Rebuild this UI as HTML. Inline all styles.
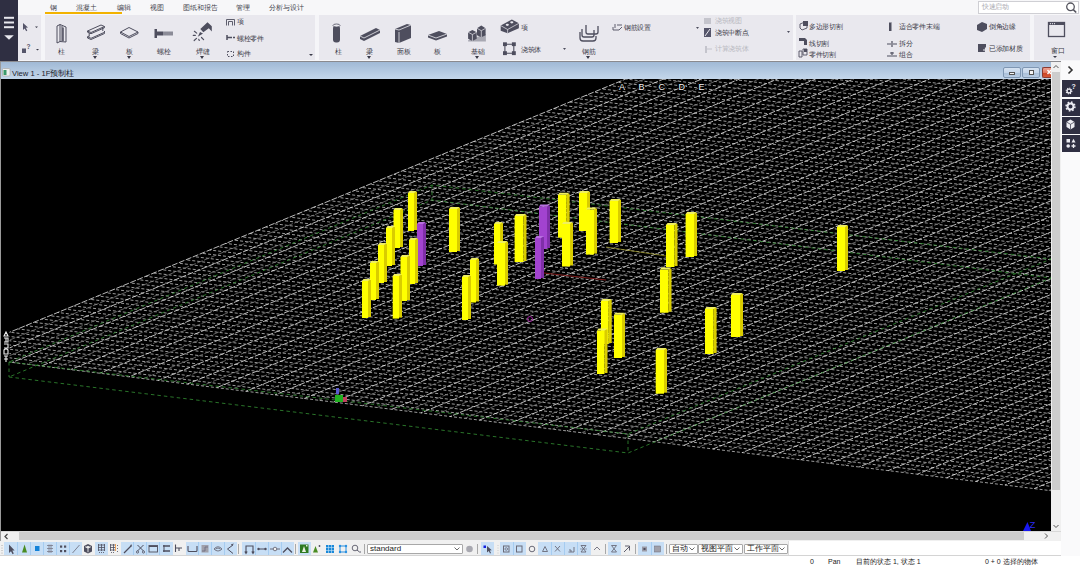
<!DOCTYPE html>
<html><head><meta charset="utf-8">
<style>
*{margin:0;padding:0;box-sizing:border-box}
html,body{width:1080px;height:568px;overflow:hidden;background:#fff;font-family:"Liberation Sans",sans-serif;font-size:8px;color:#333}
.a{position:absolute}
#tabs{left:0;top:0;width:1080px;height:15px;background:#f7f7f9}
#side{left:0;top:0;width:18px;height:61px;background:#2f2f42}
#ribbon{left:18px;top:15px;width:1062px;height:46px;background:#f5f5f8}
.grp{position:absolute;top:15px;height:45px;background:#e9e8ee}
#rline{left:0;top:60.5px;width:1061px;height:1.5px;background:#8a8a8e}
#title{left:0;top:62px;width:1051px;height:17px;background:linear-gradient(#a0b9d5,#c4d7eb);border-left:1.5px solid #a8a8a8}
#view{left:1px;top:79px;width:1050px;height:452px;background:#000;overflow:hidden}
#vscroll{left:1051px;top:62px;width:10px;height:469px;background:#f0f0f0}
#hscroll{left:1px;top:531px;width:1060px;height:10px;background:#f0f0f0;border-top:1px solid #d8d8d8}
#tool{left:0;top:541px;width:1062px;height:15px;background:#f0f0f0;border-bottom:1px solid #d0d0d0;border-right:1px solid #d0d0d0}
#status{left:0;top:556px;width:1080px;height:12px;background:#fff}
#rpanel{left:1061px;top:61px;width:19px;height:495px;background:#fafafb}
.t{position:absolute;font-size:7px;line-height:9px;color:#3e3e4a;white-space:nowrap}
.s{position:absolute;font-size:6.5px;line-height:8px;color:#3a3a46;white-space:nowrap;letter-spacing:-0.3px}
.dis{color:#b8b8c0}
.tri{position:absolute;width:0;height:0;border-left:2.5px solid transparent;border-right:2.5px solid transparent;border-top:3px solid #3a3a48}
.rb{position:absolute;top:80px;left:1062px;width:18px;height:17px;background:#2f2f42}
.hl{position:absolute;top:542px;height:13px;background:#c9e0f7;border:1px solid #a9cdf0}
.sep{position:absolute;top:543px;width:1px;height:11px;background:#c0c0c0}
.dd{position:absolute;top:543px;height:11px;background:#fff;border:1px solid #a0a0a0;font-size:7px;line-height:9px;padding-left:2px;color:#222}
.st{position:absolute;top:558px;font-size:7px;line-height:8px;color:#222;white-space:nowrap}
</style></head><body>
<div id="tabs" class="a"></div>
<div id="side" class="a"></div>
<div id="ribbon" class="a"></div>
<div class="grp" style="left:18px;width:23px"></div>
<div class="grp" style="left:45px;width:270px"></div>
<div class="grp" style="left:319px;width:474px"></div>
<div class="grp" style="left:796px;width:234px"></div>
<div class="grp" style="left:1034px;width:46px"></div>
<div id="rline" class="a"></div>

<!-- tabs -->
<div class="t" style="left:50px;top:3px">钢</div>
<div class="t" style="left:76px;top:3px">混凝土</div>
<div class="t" style="left:117px;top:3px">编辑</div>
<div class="t" style="left:150px;top:3px">视图</div>
<div class="t" style="left:183px;top:3px">图纸和报告</div>
<div class="t" style="left:236px;top:3px">管理</div>
<div class="t" style="left:269px;top:3px">分析与设计</div>
<div class="a" style="left:45px;top:12px;width:77px;height:2px;background:#f2b200"></div>
<div class="a" style="left:978px;top:1px;width:101px;height:13px;background:#fff;border:1px solid #cfcfd4"></div>
<div class="s dis" style="left:982px;top:3px;color:#a8a8b0">快速启动</div>
<svg class="a" style="left:1065px;top:1px" width="14" height="13"><circle cx="5.5" cy="5.8" r="3.8" stroke="#55555f" stroke-width="1.3" fill="none"/><path d="M8.3 8.6L11.2 11.5" stroke="#55555f" stroke-width="1.6"/></svg>

<!-- sidebar -->
<svg class="a" style="left:0;top:0" width="18" height="61">
<rect x="4" y="16.8" width="10" height="2" fill="#e8e8ee"/><rect x="4" y="21.5" width="10" height="2" fill="#e8e8ee"/><rect x="4" y="26.2" width="10" height="2" fill="#e8e8ee"/>
<path d="M4.2 35.2L13.8 35.2L9 39.8Z" fill="#e8e8ee"/>
</svg>

<!-- group 0 -->
<svg class="a" style="left:18px;top:15px" width="23" height="45">
<path d="M5 8L5 15L6.6 13.4L8.2 16.2L9.3 15.6L7.8 12.8L10 12.6Z" fill="#55556a"/>
<path d="M17 11.5L20 11.5L18.5 13Z" fill="#3a3a48"/>
<rect x="4" y="33.5" width="4" height="4.5" fill="#55556a"/>
<text x="8.5" y="33.5" font-size="6.5" font-weight="bold" fill="#55556a" font-family="Liberation Sans">?</text>
<path d="M18 34L21 34L19.5 35.5Z" fill="#3a3a48"/>
</svg>

<!-- group 1 icons -->
<svg class="a" style="left:45px;top:15px" width="270" height="45" fill="none" stroke="#4e4e5e" stroke-width="1">
<!-- column -->
<path d="M12 11L15 9.5L15 26.5L12 28Z M15 9.5L21 12L21 27L15 26.5 M17 11L17 26" />
<path d="M18 12.5L18 26" stroke-width="1.5"/>
<!-- beam -->
<path d="M42.5 16L56 10L59.5 11.5L46 17.5Z M42.5 16L42.5 17.2L46 18.7L59.5 12.7L59.5 11.5 M44.2 17.8L44.2 21.5 M42.5 21.8L46 23.3L59.5 17.3L59.5 16 M42.5 21.8L42.5 23L46 24.5L59.5 18.5L59.5 17.3 M42.5 21.8L44.2 21 M57.8 12.3L57.8 16"/>
<!-- plate -->
<path d="M75.5 17L84 12.5L93 17L84 21.5Z M75.5 17L75.5 18.5L84 23L93 18.5L93 17"/>
<!-- bolt -->
<rect x="109.5" y="14" width="2.5" height="9" fill="#4e4e5e" stroke="none"/>
<rect x="112" y="16.5" width="6" height="4" fill="#4e4e5e" stroke="none"/>
<path d="M119 16.5L119 20.5 M121 16.5L121 20.5 M123 16.5L123 20.5 M125 16.5L125 20.5 M127 16.5L127 20.5" stroke-width="1.2"/>
<!-- weld -->
<path d="M155.3 14L162.5 7.3L166.8 11.2L166.8 16.5L163.8 13.2L158.3 17.2Z" fill="#4e4e5e" stroke="none"/>
<path d="M152.8 21.8L155 17L158 18.6Z" fill="#4e4e5e" stroke="none"/>
<path d="M149.4 16.3L151.7 18.1 M148.3 20.4L150.3 20.4 M149.2 25.5L151.5 23.4 M153.8 24.4L154.3 25.5 M156.5 22.5L158.6 24.6" stroke-width="1.2" stroke-linecap="round"/>
<!-- small icons -->
<path d="M181.5 10.5L181.5 4.5L189.5 4.5L189.5 10.5 M183.5 10.5L183.5 6.5L187.5 6.5L187.5 10.5" stroke-width="0.9"/>
<path d="M182 20L182 25 M182 22.5L187 22.5 M188 22.5L190 22.5" stroke-width="1.5"/>
<rect x="182.5" y="36.5" width="6" height="5" stroke-dasharray="1.5 1.5"/>
<path d="M264 39L268 39L266 41Z" fill="#3a3a48" stroke="none"/>
</svg>
<div class="s" style="left:58px;top:48px">柱</div>
<div class="s" style="left:92px;top:48px">梁</div>
<div class="tri" style="left:93px;top:56px"></div>
<div class="s" style="left:126px;top:48px">板</div>
<div class="tri" style="left:127px;top:56px"></div>
<div class="s" style="left:157px;top:48px">螺栓</div>
<div class="s" style="left:196px;top:48px">焊缝</div>
<div class="tri" style="left:200px;top:56px"></div>
<div class="s" style="left:237px;top:18px">项</div>
<div class="s" style="left:237px;top:35px">螺栓零件</div>
<div class="s" style="left:237px;top:50px">构件</div>

<!-- group 2 -->
<svg class="a" style="left:319px;top:15px" width="474" height="45">
<g fill="#4e4e5e">
<rect x="14" y="10.5" width="7" height="17" rx="3"/>
<ellipse cx="17.5" cy="10.5" rx="3.5" ry="1.5" fill="#e9e8ee" stroke="#4e4e5e" stroke-width="0.8"/>
<path d="M41 21L41 24L45 26L61 18L61 15L57 13Z"/>
<path d="M41 21L45 23L61 15" stroke="#e9e8ee" stroke-width="0.8" fill="none"/>
<path d="M76 14L76 27L80 28L92 23L92 10L88 9Z"/>
<path d="M76 14L80 15L92 10" stroke="#e9e8ee" stroke-width="0.8" fill="none"/>
<path d="M80 17L80 28" stroke="#e9e8ee" stroke-width="0.8"/>
<path d="M109 20L109 22.5L117 25.5L128 21.5L128 19L120 16Z"/>
<path d="M109 20L117 23L128 19" stroke="#e9e8ee" stroke-width="0.8" fill="none"/>
<path d="M149.1 25.3L158 22L166.9 19.1L166.9 26.5L149.1 26.5Z" fill="#a8a8b2"/>
<path d="M149.1 17.2L153.4 14.9L157.7 17.2L157.7 23.8L153.4 25.9L149.1 23.8Z"/>
<path d="M158 13.3L162.3 10.6L166.6 13.3L166.6 20.3L162.3 22.2L158 20.3Z"/>
<path d="M149.1 17.2L153.4 19.5L157.7 17.2M153.4 19.5L153.4 25.9M158 13.3L162.3 15.7L166.6 13.3M162.3 15.7L162.3 22.2" stroke="#e9e8ee" stroke-width="0.7" fill="none"/>
<path d="M181.7 10.6L192.9 4.4L199.9 8.3L199.9 13.3L188.6 18.2L181.7 15.7Z"/>
<path d="M181.7 10.6L188.6 14.5L199.9 8.3M188.6 14.5L188.6 18.2" stroke="#e9e8ee" stroke-width="0.7" fill="none"/>
<ellipse cx="188.3" cy="9.8" rx="1.6" ry="1.1" fill="#e9e8ee"/><ellipse cx="192.8" cy="7.3" rx="1.6" ry="1.1" fill="#e9e8ee"/>
<rect x="184" y="27.3" width="3.9" height="3.8"/><rect x="192.9" y="27.3" width="3.9" height="3.8"/><rect x="184" y="36.2" width="3.9" height="3.9"/><rect x="192.9" y="36.2" width="3.9" height="3.9"/>
<path d="M244 33L247 33L245.5 35Z"/>
<path d="M377 12L380 12L378.5 14Z"/>
<path d="M468 16L471 16L469.5 18Z"/>
</g>
<path d="M185.9 29L185.9 38 M194.8 29L194.8 38 M186 29.2L194.8 29.2 M186 38.2L194.8 38.2" stroke="#4e4e5e" stroke-width="1.1" fill="none"/>
<g fill="none" stroke="#4e4e5e" stroke-width="1.3">
<path d="M263 14L263 20Q263 22 265 22L273 22Q275 22 275 20L275 15 M267 10L267 17Q267 19 269 19L277 19Q279 19 279 17L279 11"/>
<path d="M261 17L261 23Q261 26 264 26L274 26Q277 26 277 23L277 21"/>
<path d="M294 12L294 15L300 15L303 12 M296 9L296 13 M298 10L303 10" stroke-width="0.9"/>
</g>
<g fill="#c4c4cc"><rect x="385" y="3" width="7" height="6"/><rect x="386" y="31" width="2" height="7"/><path d="M388 34L393 34" stroke="#c4c4cc" stroke-width="1"/></g>
<g fill="#55556a"><path d="M385 13L392 13L392 22L385 22Z"/></g>
<path d="M386 21L391 14" stroke="#e9e8ee" stroke-width="1"/>
</svg>
<div class="s" style="left:335px;top:48px">柱</div>
<div class="s" style="left:366px;top:48px">梁</div>
<div class="tri" style="left:367px;top:56px"></div>
<div class="s" style="left:397px;top:48px">面板</div>
<div class="s" style="left:434px;top:48px">板</div>
<div class="s" style="left:471px;top:48px">基础</div>
<div class="tri" style="left:475px;top:56px"></div>
<div class="s" style="left:521px;top:23.5px">项</div>
<div class="s" style="left:521px;top:46px">浇筑体</div>
<div class="s" style="left:582px;top:48px">钢筋</div>
<div class="tri" style="left:586px;top:56px"></div>
<div class="s" style="left:624px;top:23.5px">钢筋设置</div>
<div class="s dis" style="left:715px;top:17px">浇筑视图</div>
<div class="s" style="left:715px;top:29px">浇筑中断点</div>
<div class="s dis" style="left:715px;top:45px">计算浇筑体</div>

<!-- group 3 -->
<svg class="a" style="left:796px;top:15px" width="234" height="45">
<g fill="#4e4e5e">
<path d="M4 9L9 7L11 9L11 13L6 15L4 13Z" fill="none" stroke="#4e4e5e" stroke-width="0.9"/>
<rect x="7" y="6" width="5" height="5"/>
<path d="M3 23L9 23L11 25L11 30L8 30L8 26L3 26Z"/>
<path d="M3 36L6 36L6 42L3 42Z M7 34L11 34L11 40L7 40Z" fill="none" stroke="#4e4e5e" stroke-width="0.9"/>
<rect x="8" y="34" width="3" height="3"/>
<rect x="93" y="7" width="2.5" height="9"/><rect x="93" y="6" width="2.5" height="1.5" fill="#e9e8ee"/>
<path d="M91 29L95 29 M97 29L101 29 M96 26L96 32" stroke="#4e4e5e" stroke-width="1.2"/>
<path d="M91 41L101 41 M96 37L96 40 M94 38L98 38" stroke="#4e4e5e" stroke-width="1.2"/>
<path d="M181 10L186 7L191 9L191 14L186 17L181 15Z"/>
<path d="M182 29L190 29L190 37L182 37Z"/>
<path d="M187 35L192 35 M189.5 32.5L189.5 37.5" stroke="#e9e8ee" stroke-width="1.2"/>
</g>
</svg>
<div class="s" style="left:809px;top:23px">多边形切割</div>
<div class="s" style="left:809px;top:40px">线切割</div>
<div class="s" style="left:809px;top:51px">零件切割</div>
<div class="s" style="left:899px;top:23px">适合零件末端</div>
<div class="s" style="left:899px;top:40px">拆分</div>
<div class="s" style="left:899px;top:51px">组合</div>
<div class="s" style="left:989px;top:23px">倒角边缘</div>
<div class="s" style="left:989px;top:45px">已添加材质</div>

<!-- group 4 -->
<svg class="a" style="left:1034px;top:15px" width="46" height="45">
<rect x="14.5" y="7.5" width="16" height="14" fill="none" stroke="#4e4e5e" stroke-width="1.3"/>
<rect x="14.5" y="7.5" width="16" height="2.5" fill="#4e4e5e"/>
<circle cx="16.5" cy="8.7" r="0.6" fill="#e9e8ee"/><circle cx="18.5" cy="8.7" r="0.6" fill="#e9e8ee"/><circle cx="20.5" cy="8.7" r="0.6" fill="#e9e8ee"/>
<path d="M19 41L23 41L21 43Z" fill="#3a3a48"/>
</svg>
<div class="s" style="left:1051px;top:47px">窗口</div>

<!-- title bar -->
<div id="title" class="a"></div>
<svg class="a" style="left:1px;top:68px" width="10" height="10"><rect x="1.5" y="0.5" width="7.5" height="7.5" rx="1" fill="#eef0ee" stroke="#b0b0b0" stroke-width="0.8"/><rect x="2.5" y="2" width="3" height="5" fill="#3a9a6a"/></svg>
<div class="a" style="left:12px;top:68.5px;font-size:7.6px;line-height:9px;color:#1a1a2a;white-space:nowrap">View 1 - 1F预制柱</div>
<div class="a" style="left:1003px;top:67px;width:18px;height:10.5px;border:1px solid #7f97b3;border-radius:2px;background:linear-gradient(#d6e3f1 0%,#c5d6ea 50%,#a9bfd8 52%,#b9cde3 100%)"></div>
<div class="a" style="left:1009px;top:72px;width:6px;height:3px;background:#f4f4f4;border:0.8px solid #555"></div>
<div class="a" style="left:1022px;top:67px;width:18px;height:10.5px;border:1px solid #7f97b3;border-radius:2px;background:linear-gradient(#d6e3f1 0%,#c5d6ea 50%,#a9bfd8 52%,#b9cde3 100%)"></div>
<div class="a" style="left:1028.5px;top:69.5px;width:5.5px;height:5px;background:#f4f4f4;border:0.8px solid #555"></div>
<div class="a" style="left:1042px;top:67px;width:9px;height:10.5px;border:1px solid #8a3a30;border-right:none;border-radius:2px 0 0 2px;background:linear-gradient(#eea090 0%,#e07a60 50%,#c9401f 52%,#d65a3a 100%)"></div>
<svg class="a" style="left:1042px;top:67px" width="9" height="10"><path d="M5.5 3L9 7M5.5 7L9 3" stroke="#fff" stroke-width="1.4"/></svg>
<!-- viewport -->
<div id="view" class="a">
<svg width="1050" height="452" viewBox="1 79 1050 452" style="position:absolute;left:0;top:0">
<clipPath id="gc"><rect x="9.5" y="79" width="1050" height="460"/></clipPath>
<g clip-path="url(#gc)">
<g stroke="#c4c4c4" stroke-width="0.8" fill="none" stroke-dasharray="3 2"><path d="M-46.2 355.2L1051.0 490.7" stroke-dashoffset="1.0"/><path d="M-38.2 351.9L1051.0 486.4" stroke-dashoffset="2.2"/><path d="M-30.2 348.6L1051.0 482.2" stroke-dashoffset="1.5"/><path d="M-22.2 345.3L1051.0 477.9" stroke-dashoffset="2.4"/><path d="M-14.2 342.0L1051.0 473.6" stroke-dashoffset="2.5"/><path d="M-6.2 338.8L1051.0 469.3" stroke-dashoffset="0.3"/><path d="M1.8 335.5L1051.0 465.0" stroke-dashoffset="0.1"/><path d="M9.8 332.2L1051.0 460.8" stroke-dashoffset="3.3"/><path d="M17.8 328.9L1051.0 456.5" stroke-dashoffset="1.0"/><path d="M25.8 325.6L1051.0 452.2" stroke-dashoffset="0.9"/><path d="M33.8 322.3L1051.0 447.9" stroke-dashoffset="4.0"/><path d="M41.8 319.0L1051.0 443.7" stroke-dashoffset="1.9"/><path d="M49.8 315.7L1051.0 439.4" stroke-dashoffset="3.3"/><path d="M57.8 312.5L1051.0 435.1" stroke-dashoffset="1.9"/><path d="M65.8 309.2L1051.0 430.8" stroke-dashoffset="2.6"/><path d="M73.8 305.9L1051.0 426.6" stroke-dashoffset="0.6"/><path d="M81.8 302.6L1051.0 422.3" stroke-dashoffset="2.5"/><path d="M89.8 299.3L1051.0 418.0" stroke-dashoffset="3.5"/><path d="M97.8 296.0L1051.0 413.7" stroke-dashoffset="2.1"/><path d="M105.8 292.7L1051.0 409.5" stroke-dashoffset="3.0"/><path d="M113.8 289.4L1051.0 405.2" stroke-dashoffset="2.7"/><path d="M121.8 286.2L1051.0 400.9" stroke-dashoffset="0.3"/><path d="M129.8 282.9L1051.0 396.6" stroke-dashoffset="3.0"/><path d="M137.8 279.6L1051.0 392.4" stroke-dashoffset="2.4"/><path d="M145.8 276.3L1051.0 388.1" stroke-dashoffset="1.2"/><path d="M153.8 273.0L1051.0 383.8" stroke-dashoffset="0.1"/><path d="M161.8 269.7L1051.0 379.5" stroke-dashoffset="3.5"/><path d="M169.8 266.4L1051.0 375.3" stroke-dashoffset="1.9"/><path d="M177.8 263.1L1051.0 371.0" stroke-dashoffset="2.9"/><path d="M185.8 259.8L1051.0 366.7" stroke-dashoffset="3.5"/><path d="M193.8 256.6L1051.0 362.4" stroke-dashoffset="2.9"/><path d="M201.8 253.3L1051.0 358.1" stroke-dashoffset="3.7"/><path d="M209.8 250.0L1051.0 353.9" stroke-dashoffset="1.6"/><path d="M217.8 246.7L1051.0 349.6" stroke-dashoffset="3.2"/><path d="M225.8 243.4L1051.0 345.3" stroke-dashoffset="1.8"/><path d="M233.8 240.1L1051.0 341.0" stroke-dashoffset="3.7"/><path d="M241.8 236.8L1051.0 336.8" stroke-dashoffset="3.5"/><path d="M249.8 233.5L1051.0 332.5" stroke-dashoffset="0.4"/><path d="M257.8 230.3L1051.0 328.2" stroke-dashoffset="0.5"/><path d="M265.8 227.0L1051.0 323.9" stroke-dashoffset="0.9"/><path d="M273.8 223.7L1051.0 319.7" stroke-dashoffset="3.9"/><path d="M281.8 220.4L1051.0 315.4" stroke-dashoffset="1.7"/><path d="M289.8 217.1L1051.0 311.1" stroke-dashoffset="2.5"/><path d="M297.8 213.8L1051.0 306.8" stroke-dashoffset="1.2"/><path d="M305.8 210.5L1051.0 302.6" stroke-dashoffset="2.0"/><path d="M313.8 207.2L1051.0 298.3" stroke-dashoffset="1.5"/><path d="M321.8 204.0L1051.0 294.0" stroke-dashoffset="1.4"/><path d="M329.8 200.7L1051.0 289.7" stroke-dashoffset="2.3"/><path d="M337.8 197.4L1051.0 285.5" stroke-dashoffset="2.3"/><path d="M345.8 194.1L1051.0 281.2" stroke-dashoffset="3.6"/><path d="M353.8 190.8L1051.0 276.9" stroke-dashoffset="2.7"/><path d="M361.8 187.5L1051.0 272.6" stroke-dashoffset="3.7"/><path d="M369.8 184.2L1051.0 268.4" stroke-dashoffset="3.4"/><path d="M377.8 180.9L1051.0 264.1" stroke-dashoffset="4.0"/><path d="M385.8 177.6L1051.0 259.8" stroke-dashoffset="2.7"/><path d="M393.8 174.4L1051.0 255.5" stroke-dashoffset="0.7"/><path d="M401.8 171.1L1051.0 251.2" stroke-dashoffset="3.4"/><path d="M409.8 167.8L1051.0 247.0" stroke-dashoffset="3.9"/><path d="M417.8 164.5L1051.0 242.7" stroke-dashoffset="3.6"/><path d="M425.8 161.2L1051.0 238.4" stroke-dashoffset="2.3"/><path d="M433.8 157.9L1051.0 234.1" stroke-dashoffset="2.9"/><path d="M441.8 154.6L1051.0 229.9" stroke-dashoffset="0.8"/><path d="M449.8 151.3L1051.0 225.6" stroke-dashoffset="3.3"/><path d="M457.8 148.1L1051.0 221.3" stroke-dashoffset="2.3"/><path d="M465.8 144.8L1051.0 217.0" stroke-dashoffset="1.1"/><path d="M473.8 141.5L1051.0 212.8" stroke-dashoffset="0.3"/><path d="M481.8 138.2L1051.0 208.5" stroke-dashoffset="3.4"/><path d="M489.8 134.9L1051.0 204.2" stroke-dashoffset="4.0"/><path d="M497.8 131.6L1051.0 199.9" stroke-dashoffset="0.4"/><path d="M505.8 128.3L1051.0 195.7" stroke-dashoffset="3.2"/><path d="M513.8 125.0L1051.0 191.4" stroke-dashoffset="1.6"/><path d="M521.8 121.8L1051.0 187.1" stroke-dashoffset="0.6"/><path d="M529.8 118.5L1051.0 182.8" stroke-dashoffset="1.2"/><path d="M537.8 115.2L1051.0 178.6" stroke-dashoffset="3.1"/><path d="M545.8 111.9L1051.0 174.3" stroke-dashoffset="3.5"/><path d="M553.8 108.6L1051.0 170.0" stroke-dashoffset="0.2"/><path d="M561.8 105.3L1051.0 165.7" stroke-dashoffset="2.5"/><path d="M569.8 102.0L1051.0 161.5" stroke-dashoffset="0.2"/><path d="M577.8 98.7L1051.0 157.2" stroke-dashoffset="2.9"/><path d="M585.8 95.4L1051.0 152.9" stroke-dashoffset="1.3"/><path d="M593.8 92.2L1051.0 148.6" stroke-dashoffset="3.5"/><path d="M601.8 88.9L1051.0 144.3" stroke-dashoffset="3.9"/><path d="M609.8 85.6L1051.0 140.1" stroke-dashoffset="2.0"/><path d="M617.8 82.3L1051.0 135.8" stroke-dashoffset="4.0"/><path d="M625.8 79.0L1051.0 131.5" stroke-dashoffset="1.2"/><path d="M633.8 75.7L1051.0 127.2" stroke-dashoffset="0.3"/><path d="M641.8 72.4L1051.0 123.0" stroke-dashoffset="2.4"/><path d="M649.8 69.1L1051.0 118.7" stroke-dashoffset="0.1"/><path d="M657.8 65.9L1051.0 114.4" stroke-dashoffset="0.8"/><path d="M665.8 62.6L1051.0 110.1" stroke-dashoffset="1.6"/><path d="M673.8 59.3L1051.0 105.9" stroke-dashoffset="2.4"/><path d="M681.8 56.0L1051.0 101.6" stroke-dashoffset="0.6"/><path d="M689.8 52.7L1051.0 97.3" stroke-dashoffset="0.2"/><path d="M697.8 49.4L1051.0 93.0" stroke-dashoffset="3.5"/><path d="M705.8 46.1L1051.0 88.8" stroke-dashoffset="1.3"/><path d="M713.8 42.8L1051.0 84.5" stroke-dashoffset="3.8"/><path d="M721.8 39.6L1051.0 80.2" stroke-dashoffset="3.6"/><path d="M729.8 36.3L1051.0 75.9" stroke-dashoffset="1.5"/><path d="M737.8 33.0L1051.0 71.7" stroke-dashoffset="1.8"/><path d="M745.8 29.7L1051.0 67.4" stroke-dashoffset="2.1"/><path d="M753.8 26.4L1051.0 63.1" stroke-dashoffset="2.6"/></g>
<g stroke="#787878" stroke-width="0.8" fill="none" stroke-dasharray="6 1.5"><path d="M-31.6 357.0L644.8 79" stroke-dashoffset="0.2"/><path d="M-2.4 360.6L682.8 79" stroke-dashoffset="4.0"/><path d="M26.8 364.2L720.8 79" stroke-dashoffset="5.1"/><path d="M56.0 367.8L758.7 79" stroke-dashoffset="2.2"/><path d="M85.2 371.4L796.7 79" stroke-dashoffset="1.6"/><path d="M114.4 375.0L834.7 79" stroke-dashoffset="5.6"/><path d="M143.6 378.6L872.7 79" stroke-dashoffset="1.7"/><path d="M172.8 382.2L910.6 79" stroke-dashoffset="1.3"/><path d="M202.0 385.9L948.6 79" stroke-dashoffset="3.0"/><path d="M231.2 389.5L986.6 79" stroke-dashoffset="4.9"/><path d="M260.4 393.1L1024.5 79" stroke-dashoffset="0.7"/><path d="M289.6 396.7L1062.5 79" stroke-dashoffset="2.3"/><path d="M318.8 400.3L1100.5 79" stroke-dashoffset="2.3"/><path d="M348.0 403.9L1138.5 79" stroke-dashoffset="5.8"/><path d="M377.2 407.5L1176.4 79" stroke-dashoffset="3.1"/><path d="M406.4 411.1L1214.4 79" stroke-dashoffset="6.0"/><path d="M435.6 414.7L1252.4 79" stroke-dashoffset="1.2"/><path d="M464.8 418.3L1290.4 79" stroke-dashoffset="2.4"/><path d="M494.0 421.9L1328.3 79" stroke-dashoffset="4.6"/><path d="M523.2 425.5L1366.3 79" stroke-dashoffset="6.2"/><path d="M552.4 429.1L1404.3 79" stroke-dashoffset="3.2"/><path d="M581.6 432.7L1442.3 79" stroke-dashoffset="1.6"/><path d="M610.8 436.3L1480.2 79" stroke-dashoffset="0.8"/><path d="M640.0 439.9L1518.2 79" stroke-dashoffset="3.7"/><path d="M669.2 443.6L1556.2 79" stroke-dashoffset="1.3"/><path d="M698.4 447.2L1594.2 79" stroke-dashoffset="5.6"/><path d="M727.6 450.8L1632.1 79" stroke-dashoffset="5.9"/><path d="M756.8 454.4L1670.1 79" stroke-dashoffset="1.3"/><path d="M786.0 458.0L1708.1 79" stroke-dashoffset="2.0"/><path d="M815.2 461.6L1746.1 79" stroke-dashoffset="5.7"/><path d="M844.4 465.2L1784.0 79" stroke-dashoffset="4.5"/><path d="M873.6 468.8L1822.0 79" stroke-dashoffset="5.6"/><path d="M902.8 472.4L1860.0 79" stroke-dashoffset="2.4"/><path d="M932.0 476.0L1898.0 79" stroke-dashoffset="0.9"/><path d="M961.2 479.6L1935.9 79" stroke-dashoffset="2.0"/><path d="M990.4 483.2L1973.9 79" stroke-dashoffset="5.6"/><path d="M1019.6 486.8L2011.9 79" stroke-dashoffset="1.9"/><path d="M1048.8 490.4L2049.9 79" stroke-dashoffset="2.4"/><path d="M1078.0 494.0L2087.8 79" stroke-dashoffset="2.9"/></g><g stroke="#e8e8e8" stroke-width="0.8" fill="none" stroke-dasharray="6 1.5"><path d="M-46.2 355.2L625.8 79" stroke-dashoffset="4.2"/><path d="M-17.0 358.8L663.8 79" stroke-dashoffset="3.9"/><path d="M12.2 362.4L701.8 79" stroke-dashoffset="4.3"/><path d="M41.4 366.0L739.7 79" stroke-dashoffset="6.6"/><path d="M70.6 369.6L777.7 79" stroke-dashoffset="3.5"/><path d="M99.8 373.2L815.7 79" stroke-dashoffset="3.0"/><path d="M129.0 376.8L853.7 79" stroke-dashoffset="5.0"/><path d="M158.2 380.4L891.6 79" stroke-dashoffset="1.7"/><path d="M187.4 384.0L929.6 79" stroke-dashoffset="2.1"/><path d="M216.6 387.7L967.6 79" stroke-dashoffset="6.8"/><path d="M245.8 391.3L1005.6 79" stroke-dashoffset="3.6"/><path d="M275.0 394.9L1043.5 79" stroke-dashoffset="3.8"/><path d="M304.2 398.5L1081.5 79" stroke-dashoffset="0.1"/><path d="M333.4 402.1L1119.5 79" stroke-dashoffset="2.9"/><path d="M362.6 405.7L1157.5 79" stroke-dashoffset="4.1"/><path d="M391.8 409.3L1195.4 79" stroke-dashoffset="0.1"/><path d="M421.0 412.9L1233.4 79" stroke-dashoffset="4.3"/><path d="M450.2 416.5L1271.4 79" stroke-dashoffset="4.4"/><path d="M479.4 420.1L1309.4 79" stroke-dashoffset="0.4"/><path d="M508.6 423.7L1347.3 79" stroke-dashoffset="4.4"/><path d="M537.8 427.3L1385.3 79" stroke-dashoffset="3.3"/><path d="M567.0 430.9L1423.3 79" stroke-dashoffset="4.8"/><path d="M596.2 434.5L1461.3 79" stroke-dashoffset="2.5"/><path d="M625.4 438.1L1499.2 79" stroke-dashoffset="4.9"/><path d="M654.6 441.7L1537.2 79" stroke-dashoffset="5.2"/><path d="M683.8 445.4L1575.2 79" stroke-dashoffset="0.2"/><path d="M713.0 449.0L1613.1 79" stroke-dashoffset="0.4"/><path d="M742.2 452.6L1651.1 79" stroke-dashoffset="4.7"/><path d="M771.4 456.2L1689.1 79" stroke-dashoffset="6.7"/><path d="M800.6 459.8L1727.1 79" stroke-dashoffset="1.8"/><path d="M829.8 463.4L1765.0 79" stroke-dashoffset="3.2"/><path d="M859.0 467.0L1803.0 79" stroke-dashoffset="4.1"/><path d="M888.2 470.6L1841.0 79" stroke-dashoffset="2.2"/><path d="M917.4 474.2L1879.0 79" stroke-dashoffset="2.5"/><path d="M946.6 477.8L1916.9 79" stroke-dashoffset="2.2"/><path d="M975.8 481.4L1954.9 79" stroke-dashoffset="2.6"/><path d="M1005.0 485.0L1992.9 79" stroke-dashoffset="4.2"/><path d="M1034.2 488.6L2030.9 79" stroke-dashoffset="2.1"/><path d="M1063.4 492.2L2068.8 79" stroke-dashoffset="2.6"/><path d="M1092.6 495.8L2106.8 79" stroke-dashoffset="5.4"/></g>
</g>
<g fill="none" stroke="#349034" stroke-width="0.8" stroke-dasharray="3.5 3">
<path d="M9 362L628 434L1051 259L432 185Z"/>
<path d="M9 377L628 453L1051 278L432 200Z"/>
<path d="M9 362L9 377M628 434L628 453M432 185L432 200"/>
</g>
<g fill="#f4f4f4" font-family="Liberation Sans" font-size="9" stroke="#000" stroke-width="2" paint-order="stroke">
<text x="619" y="89.5">A</text><text x="638.5" y="89.5">B</text><text x="658.5" y="89.5">C</text><text x="678.5" y="89.5">D</text><text x="698.5" y="89.5">E</text>
</g>
<g fill="none" stroke="#f0f0f0" stroke-width="1.1">
<path d="M6 332L4 336L8 336Z M4 338L8 338L8 342L4 342M6 338L6 342 M4 344L8 344L8 348L4 348 M4 350Q6 348 8 350L8 354L4 354Z M4 356L8 356M6 356L6 362M4 359L8 359"/>
</g>
<rect x="408.0" y="193.0" width="6.0" height="38.0" fill="#ffff00"/><rect x="414.0" y="192.0" width="3" height="38.0" fill="#d9cc00"/><polygon points="408.0,193.0 409.5,191.0 417.0,191.0 414.0,193.0" fill="#f0f060"/><rect x="579.0" y="193.0" width="8.0" height="38.0" fill="#ffff00"/><rect x="587.0" y="192.0" width="3" height="38.0" fill="#d9cc00"/><polygon points="579.0,193.0 580.5,191.0 590.0,191.0 587.0,193.0" fill="#f0f060"/><rect x="558.0" y="194.7" width="8.6" height="43.0" fill="#ffff00"/><rect x="566.6" y="193.7" width="3" height="43.0" fill="#d9cc00"/><polygon points="558.0,194.7 559.5,192.7 569.6,192.7 566.6,194.7" fill="#f0f060"/><rect x="609.6" y="201.0" width="8.4" height="42.0" fill="#ffff00"/><rect x="618.0" y="200.0" width="3" height="42.0" fill="#d9cc00"/><polygon points="609.6,201.0 611.1,199.0 621.0,199.0 618.0,201.0" fill="#f0f060"/><rect x="393.5" y="210.0" width="6.5" height="38.0" fill="#ffff00"/><rect x="400.0" y="209.0" width="3" height="38.0" fill="#d9cc00"/><polygon points="393.5,210.0 395.0,208.0 403.0,208.0 400.0,210.0" fill="#f0f060"/><rect x="539.0" y="206.5" width="8.0" height="42.5" fill="#a243cf"/><rect x="547.0" y="205.5" width="3" height="42.5" fill="#7f2fa8"/><polygon points="539.0,206.5 540.5,204.5 550.0,204.5 547.0,206.5" fill="#b870e0"/><rect x="449.0" y="209.0" width="8.0" height="43.0" fill="#ffff00"/><rect x="457.0" y="208.0" width="3" height="43.0" fill="#d9cc00"/><polygon points="449.0,209.0 450.5,207.0 460.0,207.0 457.0,209.0" fill="#f0f060"/><rect x="586.0" y="209.6" width="8.0" height="45.0" fill="#ffff00"/><rect x="594.0" y="208.6" width="3" height="45.0" fill="#d9cc00"/><polygon points="586.0,209.6 587.5,207.6 597.0,207.6 594.0,209.6" fill="#f0f060"/><rect x="685.6" y="214.0" width="8.4" height="43.0" fill="#ffff00"/><rect x="694.0" y="213.0" width="3" height="43.0" fill="#d9cc00"/><polygon points="685.6,214.0 687.1,212.0 697.0,212.0 694.0,214.0" fill="#f0f060"/><rect x="514.6" y="216.0" width="8.9" height="46.0" fill="#ffff00"/><rect x="523.5" y="215.0" width="3" height="46.0" fill="#d9cc00"/><polygon points="514.6,216.0 516.1,214.0 526.5,214.0 523.5,216.0" fill="#f0f060"/><rect x="494.0" y="224.0" width="6.0" height="40.5" fill="#ffff00"/><rect x="500.0" y="223.0" width="3" height="40.5" fill="#d9cc00"/><polygon points="494.0,224.0 495.5,222.0 503.0,222.0 500.0,224.0" fill="#f0f060"/><rect x="386.0" y="228.0" width="6.0" height="38.0" fill="#ffff00"/><rect x="392.0" y="227.0" width="3" height="38.0" fill="#d9cc00"/><polygon points="386.0,228.0 387.5,226.0 395.0,226.0 392.0,228.0" fill="#f0f060"/><rect x="417.0" y="224.0" width="6.0" height="42.0" fill="#a243cf"/><rect x="423.0" y="223.0" width="3" height="42.0" fill="#7f2fa8"/><polygon points="417.0,224.0 418.5,222.0 426.0,222.0 423.0,224.0" fill="#b870e0"/><rect x="562.0" y="224.0" width="8.0" height="42.5" fill="#ffff00"/><rect x="570.0" y="223.0" width="3" height="42.5" fill="#d9cc00"/><polygon points="562.0,224.0 563.5,222.0 573.0,222.0 570.0,224.0" fill="#f0f060"/><rect x="666.0" y="225.0" width="8.5" height="42.0" fill="#ffff00"/><rect x="674.5" y="224.0" width="3" height="42.0" fill="#d9cc00"/><polygon points="666.0,225.0 667.5,223.0 677.5,223.0 674.5,225.0" fill="#f0f060"/><rect x="837.0" y="227.0" width="8.0" height="44.0" fill="#ffff00"/><rect x="845.0" y="226.0" width="3" height="44.0" fill="#d9cc00"/><polygon points="837.0,227.0 838.5,225.0 848.0,225.0 845.0,227.0" fill="#f0f060"/><rect x="535.0" y="238.0" width="6.0" height="41.0" fill="#a243cf"/><rect x="541.0" y="237.0" width="3" height="41.0" fill="#7f2fa8"/><polygon points="535.0,238.0 536.5,236.0 544.0,236.0 541.0,238.0" fill="#b870e0"/><rect x="378.0" y="245.0" width="6.0" height="38.0" fill="#ffff00"/><rect x="384.0" y="244.0" width="3" height="38.0" fill="#d9cc00"/><polygon points="378.0,245.0 379.5,243.0 387.0,243.0 384.0,245.0" fill="#f0f060"/><rect x="409.0" y="240.0" width="6.0" height="44.0" fill="#ffff00"/><rect x="415.0" y="239.0" width="3" height="44.0" fill="#d9cc00"/><polygon points="409.0,240.0 410.5,238.0 418.0,238.0 415.0,240.0" fill="#f0f060"/><rect x="497.0" y="243.0" width="8.0" height="42.6" fill="#ffff00"/><rect x="505.0" y="242.0" width="3" height="42.6" fill="#d9cc00"/><polygon points="497.0,243.0 498.5,241.0 508.0,241.0 505.0,243.0" fill="#f0f060"/><rect x="370.0" y="263.0" width="6.0" height="37.0" fill="#ffff00"/><rect x="376.0" y="262.0" width="3" height="37.0" fill="#d9cc00"/><polygon points="370.0,263.0 371.5,261.0 379.0,261.0 376.0,263.0" fill="#f0f060"/><rect x="400.5" y="257.0" width="6.5" height="44.0" fill="#ffff00"/><rect x="407.0" y="256.0" width="3" height="44.0" fill="#d9cc00"/><polygon points="400.5,257.0 402.0,255.0 410.0,255.0 407.0,257.0" fill="#f0f060"/><rect x="470.0" y="260.0" width="6.0" height="42.5" fill="#ffff00"/><rect x="476.0" y="259.0" width="3" height="42.5" fill="#d9cc00"/><polygon points="470.0,260.0 471.5,258.0 479.0,258.0 476.0,260.0" fill="#f0f060"/><rect x="660.0" y="269.6" width="8.5" height="43.1" fill="#ffff00"/><rect x="668.5" y="268.6" width="3" height="43.1" fill="#d9cc00"/><polygon points="660.0,269.6 661.5,267.6 671.5,267.6 668.5,269.6" fill="#f0f060"/><rect x="362.0" y="281.0" width="6.0" height="37.0" fill="#ffff00"/><rect x="368.0" y="280.0" width="3" height="37.0" fill="#d9cc00"/><polygon points="362.0,281.0 363.5,279.0 371.0,279.0 368.0,281.0" fill="#f0f060"/><rect x="392.7" y="276.0" width="6.3" height="42.6" fill="#ffff00"/><rect x="399.0" y="275.0" width="3" height="42.6" fill="#d9cc00"/><polygon points="392.7,276.0 394.2,274.0 402.0,274.0 399.0,276.0" fill="#f0f060"/><rect x="462.0" y="277.0" width="6.0" height="43.0" fill="#ffff00"/><rect x="468.0" y="276.0" width="3" height="43.0" fill="#d9cc00"/><polygon points="462.0,277.0 463.5,275.0 471.0,275.0 468.0,277.0" fill="#f0f060"/><rect x="731.0" y="295.0" width="9.0" height="42.0" fill="#ffff00"/><rect x="740.0" y="294.0" width="3" height="42.0" fill="#d9cc00"/><polygon points="731.0,295.0 732.5,293.0 743.0,293.0 740.0,295.0" fill="#f0f060"/><rect x="601.0" y="301.0" width="7.7" height="43.0" fill="#ffff00"/><rect x="608.7" y="300.0" width="3" height="43.0" fill="#d9cc00"/><polygon points="601.0,301.0 602.5,299.0 611.7,299.0 608.7,301.0" fill="#f0f060"/><rect x="705.0" y="309.0" width="8.6" height="45.0" fill="#ffff00"/><rect x="713.6" y="308.0" width="3" height="45.0" fill="#d9cc00"/><polygon points="705.0,309.0 706.5,307.0 716.6,307.0 713.6,309.0" fill="#f0f060"/><rect x="614.0" y="314.7" width="8.0" height="43.3" fill="#ffff00"/><rect x="622.0" y="313.7" width="3" height="43.3" fill="#d9cc00"/><polygon points="614.0,314.7 615.5,312.7 625.0,312.7 622.0,314.7" fill="#f0f060"/><rect x="597.0" y="330.5" width="7.5" height="43.5" fill="#ffff00"/><rect x="604.5" y="329.5" width="3" height="43.5" fill="#d9cc00"/><polygon points="597.0,330.5 598.5,328.5 607.5,328.5 604.5,330.5" fill="#f0f060"/><rect x="655.7" y="350.0" width="8.3" height="43.7" fill="#ffff00"/><rect x="664.0" y="349.0" width="3" height="43.7" fill="#d9cc00"/><polygon points="655.7,350.0 657.2,348.0 667.0,348.0 664.0,350.0" fill="#f0f060"/>
<path d="M544 273L606 280" stroke="#a02020" stroke-width="0.8"/><path d="M606 247L666 256" stroke="#a09a20" stroke-width="0.7"/>
<circle cx="530" cy="319" r="2.5" stroke="#a020a0" fill="none" stroke-width="1"/>
<rect x="336" y="388" width="3" height="6" fill="#5a5ad0"/>
<rect x="335" y="395" width="8" height="7" fill="#20b020"/>
<rect x="343" y="397" width="4" height="5" fill="#c04060"/>
<path d="M1023 531L1027.5 522L1031 531Z" fill="#1818f0"/>
<text x="1029.5" y="527.5" font-size="9.5" fill="#2a2af0" font-family="Liberation Sans">Z</text>
</svg>
</div>

<!-- scrollbars -->
<div id="vscroll" class="a"></div>
<div class="a" style="left:1052px;top:72px;width:8px;height:418px;background:#cdcdcd"></div>
<svg class="a" style="left:1051px;top:62px" width="10" height="10"><path d="M2.5 6L5 3.5L7.5 6" stroke="#555" fill="none" stroke-width="1"/></svg>
<svg class="a" style="left:1051px;top:521px" width="10" height="10"><path d="M2.5 4L5 6.5L7.5 4" stroke="#555" fill="none" stroke-width="1"/></svg>
<div id="hscroll" class="a"></div>
<div class="a" style="left:19px;top:532px;width:1005px;height:8px;background:#cdcdcd"></div>
<svg class="a" style="left:1px;top:531px" width="17" height="10"><path d="M6.5 3L4 5.5L6.5 8" stroke="#444" fill="none" stroke-width="1.2"/></svg><div class="a" style="left:0;top:62px;width:1px;height:479px;background:#9a9a9a"></div>
<svg class="a" style="left:1040px;top:531px" width="11" height="10"><path d="M5 2.5L7.5 5L5 7.5" stroke="#555" fill="none" stroke-width="1"/></svg>

<!-- toolbar -->
<div class="a" style="left:0;top:541px;width:1062px;height:15px;background:#fff;border-bottom:1px solid #d4d4d4;border-right:1px solid #d4d4d4"></div>
<div class="a" style="left:0;top:541px;width:789px;height:14px;background:#f0f0f0;border-right:1px solid #dcdcdc"></div>
<div class="a" style="left:4px;top:542px;width:78.0px;height:13px;background:#c7def5"></div><div class="a" style="left:16.5px;top:542px;width:1px;height:13px;background:#a6ccf0"></div><div class="a" style="left:29.5px;top:542px;width:1px;height:13px;background:#a6ccf0"></div><div class="a" style="left:42.5px;top:542px;width:1px;height:13px;background:#a6ccf0"></div><div class="a" style="left:55.5px;top:542px;width:1px;height:13px;background:#a6ccf0"></div><div class="a" style="left:68.5px;top:542px;width:1px;height:13px;background:#a6ccf0"></div>
<div class="a" style="left:95px;top:542px;width:13.0px;height:13px;background:#c7def5"></div>
<div class="a" style="left:121px;top:542px;width:51.6px;height:13px;background:#c7def5"></div><div class="a" style="left:133.4px;top:542px;width:1px;height:13px;background:#a6ccf0"></div><div class="a" style="left:146.3px;top:542px;width:1px;height:13px;background:#a6ccf0"></div><div class="a" style="left:159.2px;top:542px;width:1px;height:13px;background:#a6ccf0"></div>
<div class="a" style="left:186px;top:542px;width:51.0px;height:13px;background:#c7def5"></div><div class="a" style="left:198.2px;top:542px;width:1px;height:13px;background:#a6ccf0"></div><div class="a" style="left:211.0px;top:542px;width:1px;height:13px;background:#a6ccf0"></div><div class="a" style="left:223.8px;top:542px;width:1px;height:13px;background:#a6ccf0"></div>
<div class="a" style="left:238px;top:544px;width:1px;height:10px;background:#a8a8a8"></div>
<div class="a" style="left:242px;top:542px;width:52.0px;height:13px;background:#c7def5"></div><div class="a" style="left:254.5px;top:542px;width:1px;height:13px;background:#a6ccf0"></div><div class="a" style="left:267.5px;top:542px;width:1px;height:13px;background:#a6ccf0"></div><div class="a" style="left:280.5px;top:542px;width:1px;height:13px;background:#a6ccf0"></div>
<div class="a" style="left:295px;top:544px;width:1px;height:10px;background:#a8a8a8"></div>
<div class="a" style="left:298px;top:542px;width:12.5px;height:13px;background:#c7def5"></div>
<div class="a" style="left:364px;top:544px;width:1px;height:10px;background:#a8a8a8"></div>
<div class="a" style="left:367px;top:544px;width:96px;height:10px;background:#fff;border:1px solid #a8a8a8;border-radius:1px"></div><div class="a" style="left:370px;top:544px;font-size:8px;line-height:10px;color:#222;white-space:nowrap">standard</div><svg class="a" style="left:454px;top:547px" width="6" height="4"><path d="M0.5 0.5L3 3L5.5 0.5" stroke="#444" fill="none" stroke-width="0.8"/></svg>
<div class="a" style="left:477px;top:544px;width:1px;height:10px;background:#a8a8a8"></div>
<div class="a" style="left:481px;top:542px;width:13.0px;height:13px;background:#c7def5"></div>
<div class="a" style="left:500px;top:542px;width:26.0px;height:13px;background:#c7def5"></div><div class="a" style="left:512.5px;top:542px;width:1px;height:13px;background:#a6ccf0"></div>
<div class="a" style="left:538px;top:542px;width:52.5px;height:13px;background:#c7def5"></div><div class="a" style="left:550.6px;top:542px;width:1px;height:13px;background:#a6ccf0"></div><div class="a" style="left:563.8px;top:542px;width:1px;height:13px;background:#a6ccf0"></div><div class="a" style="left:576.9px;top:542px;width:1px;height:13px;background:#a6ccf0"></div>
<div class="a" style="left:605px;top:544px;width:1px;height:10px;background:#a8a8a8"></div>
<div class="a" style="left:608px;top:542px;width:12.6px;height:13px;background:#c7def5"></div>
<div class="a" style="left:635px;top:544px;width:1px;height:10px;background:#a8a8a8"></div>
<div class="a" style="left:638px;top:542px;width:26.0px;height:13px;background:#c7def5"></div><div class="a" style="left:650.5px;top:542px;width:1px;height:13px;background:#a6ccf0"></div>
<div class="a" style="left:665.5px;top:544px;width:1px;height:10px;background:#a8a8a8"></div>
<div class="a" style="left:669px;top:544px;width:29px;height:10px;background:#fff;border:1px solid #a8a8a8;border-radius:1px"></div><div class="a" style="left:672px;top:544px;font-size:8px;line-height:10px;color:#222;white-space:nowrap">自动</div><svg class="a" style="left:689px;top:547px" width="6" height="4"><path d="M0.5 0.5L3 3L5.5 0.5" stroke="#444" fill="none" stroke-width="0.8"/></svg>
<div class="a" style="left:698px;top:544px;width:45px;height:10px;background:#fff;border:1px solid #a8a8a8;border-radius:1px"></div><div class="a" style="left:701px;top:544px;font-size:8px;line-height:10px;color:#222;white-space:nowrap">视图平面</div><svg class="a" style="left:734px;top:547px" width="6" height="4"><path d="M0.5 0.5L3 3L5.5 0.5" stroke="#444" fill="none" stroke-width="0.8"/></svg>
<div class="a" style="left:744px;top:544px;width:44px;height:10px;background:#fff;border:1px solid #a8a8a8;border-radius:1px"></div><div class="a" style="left:747px;top:544px;font-size:8px;line-height:10px;color:#222;white-space:nowrap">工作平面</div><svg class="a" style="left:779px;top:547px" width="6" height="4"><path d="M0.5 0.5L3 3L5.5 0.5" stroke="#444" fill="none" stroke-width="0.8"/></svg>
<svg class="a" style="left:0;top:541px" width="800" height="15">
<g fill="#4e4e5e" stroke="none">
<circle cx="2" cy="4.5" r="0.5" fill="#999"/><circle cx="2" cy="7" r="0.5" fill="#999"/><circle cx="2" cy="9.5" r="0.5" fill="#999"/><circle cx="2" cy="12" r="0.5" fill="#999"/>
<path d="M9 3.5L9 12L11 10.2L12.6 13.2L13.8 12.6L12.3 9.6L14.6 9.4Z"/>
<path d="M22 11.5L24.5 3.5L27 11.5Z" fill="#4a8c22"/>
<rect x="35" y="5" width="4.5" height="5" fill="#1482d8"/>
<path d="M47 4.5L53 4.5M47 7.5L53 7.5M47 10.5L53 10.5M49 3.5L49 12M51 3.5L51 12" stroke="#7a7a88" stroke-width="0.8"/>
<rect x="60" y="4.5" width="2.2" height="2.2"/><rect x="64" y="4.5" width="2.2" height="2.2"/><rect x="60" y="9" width="2.2" height="2.2"/><rect x="64" y="9" width="2.2" height="2.2"/>
<path d="M72.5 12L79.5 4" stroke="#6a6a78" stroke-width="0.8"/>
<path d="M84 5L88 3L92 5L92 10.5L88 12.5L84 10.5Z"/>
<path d="M85.2 5.8L88 7L88 11.3M88 7L90.8 5.8" stroke="#f0f0f0" stroke-width="0.9" fill="none"/>
<path d="M85.8 6L88 4.7L90.2 6L88 7.2Z" fill="#f0f0f0"/>
<path d="M98 4L105 4M98 6.5L105 6.5M98 9L105 9M98.5 3L98.5 10M101.5 3L101.5 10M104.5 3L104.5 10M99 11.5L100 11.5M101 11.5L102 11.5M103 11.5L104 11.5" stroke="#4e4e5e" stroke-width="0.8"/>
<path d="M110 4L116 4M110 6.5L116 6.5M110 9L116 9M110.5 3L110.5 10M113.5 3L113.5 10M111 11.5L112 11.5M113 11.5L114 11.5M117.5 4L117.5 5M117.5 7L117.5 8M117.5 10L117.5 11" stroke="#4e4e5e" stroke-width="0.8"/>
<path d="M115.5 3L115.5 10" stroke="#f0a050" stroke-width="0.9"/>
<path d="M124 12L131 5" stroke="#4e4e5e" stroke-width="1.2"/><path d="M130 4L132 3.5L131.5 6Z"/>
<path d="M137.5 4L143.5 10M137.5 10L143.5 4" stroke="#4e4e5e" stroke-width="1"/><circle cx="137.5" cy="11" r="1.1" fill="none" stroke="#4e4e5e" stroke-width="0.8"/><circle cx="143.5" cy="11" r="1.1" fill="none" stroke="#4e4e5e" stroke-width="0.8"/>
<rect x="149" y="4.5" width="8.5" height="6.5" fill="none" stroke="#4e4e5e" stroke-width="0.9"/><path d="M149 5.5L157.5 5.5" stroke="#4e4e5e" stroke-width="1"/>
<path d="M163 5L170 5M163 10L170 10" stroke="#4e4e5e" stroke-width="1.4"/><path d="M164 4L164 11" stroke="#4e4e5e" stroke-width="1"/>
<path d="M175.5 3.5L175.5 11M175.5 7L182 7M179 7L179 10" stroke="#4e4e5e" stroke-width="1.1"/>
<path d="M188 5L188 9.5Q188 10.5 189 10.5L196 10.5Q197 10.5 197 9.5L197 5" stroke="#4e4e5e" fill="none" stroke-width="1.1"/>
<rect x="201.5" y="4" width="7" height="7.5" fill="#a0a0aa"/><path d="M202 10L205 10L205 6L208 6" stroke="#6a6a80" fill="none" stroke-width="0.8"/>
<path d="M214 8Q218 3.5 222 8Q218 12 214 8Z M215.5 8Q218 6 220.5 8" fill="none" stroke="#6a6a78" stroke-width="0.9"/>
<path d="M233 4L227.5 8L233 12.5M231 4L233.5 3" stroke="#4e4e5e" fill="none" stroke-width="1"/>
<path d="M246 12L246 5L253 5L253 12M244.8 10.5L246 12.5L247.2 10.5M251.8 10.5L253 12.5L254.2 10.5" stroke="#4e4e5e" fill="none" stroke-width="1.1"/>
<path d="M258 8L266 8" stroke="#4e4e5e" stroke-width="1"/><circle cx="258.5" cy="8" r="1.2"/><circle cx="265.5" cy="8" r="1.2"/>
<path d="M270 8L280 8" stroke="#6a6a78" stroke-width="1"/><circle cx="275" cy="8" r="1.8" fill="#f0f0f0" stroke="#6a6a78" stroke-width="0.9"/>
<path d="M283 11.5L287.5 7L292 11.5" stroke="#4e4e5e" fill="none" stroke-width="1.3"/>
<rect x="300" y="3.5" width="8.5" height="8.5" fill="#2f7a22"/><path d="M302 11L304 5L306 11Z" fill="#e8f0e0"/><rect x="306" y="4" width="1.5" height="1.5" fill="#e8f0e0"/>
<path d="M313 11.5L315.5 5L318 11.5Z" fill="#4a8c22"/><circle cx="319.5" cy="5" r="0.9"/>
<rect x="326" y="4" width="8" height="8" fill="#1a88d8"/><path d="M326 6.5L334 6.5M326 9.5L334 9.5M328.5 4L328.5 12M331.5 4L331.5 12" stroke="#c8e4f8" stroke-width="0.6"/>
<path d="M340 5L346 5M340 11L346 11M340 5L340 11M346 5L346 11" stroke="#2a90e0" stroke-width="1"/><circle cx="340" cy="5" r="1.2" fill="#2a90e0"/><circle cx="346" cy="5" r="1.2" fill="#2a90e0"/><circle cx="340" cy="11" r="1.2" fill="#2a90e0"/><circle cx="346" cy="11" r="1.2" fill="#2a90e0"/>
<circle cx="355" cy="7" r="2.8" fill="none" stroke="#5a5a6a" stroke-width="0.9"/><path d="M357 9L359.5 11L361 11" stroke="#5a5a6a" stroke-width="1" fill="none"/>
<circle cx="469.5" cy="8" r="3.3" fill="#a8a8b0"/>
<rect x="483.5" y="4.5" width="2.5" height="2.5" fill="#1020e0"/>
<path d="M487 5L487 11.5L488.8 10L490 12.5L491 12L489.8 9.5L491.8 9.3Z"/>
<circle cx="498" cy="4.5" r="0.4" fill="#999"/><circle cx="498" cy="7" r="0.4" fill="#999"/><circle cx="498" cy="9.5" r="0.4" fill="#999"/><circle cx="498" cy="12" r="0.4" fill="#999"/>
<rect x="503.5" y="5" width="5.5" height="6" fill="none" stroke="#6a6a78"/><circle cx="506.25" cy="8" r="1.3" fill="none" stroke="#6a6a78" stroke-width="0.8"/>
<rect x="516.5" y="5" width="5.5" height="6" fill="none" stroke="#6a6a78"/>
<circle cx="532" cy="8" r="2.8" fill="none" stroke="#5a5a6a" stroke-width="0.9"/>
<path d="M542.5 10.5L545 5.5L547.5 10.5Z" fill="none" stroke="#6a6a78" stroke-width="0.9"/>
<path d="M555 5L560 10.5M555 10.5L560 5" stroke="#6a6a78" stroke-width="0.9"/>
<path d="M568.5 11L574 11L574 6M571 11L571 9L569 9" stroke="#6a6a78" fill="none" stroke-width="0.9"/>
<path d="M581 4.5L586 4.5L581 11L586 11Z" fill="none" stroke="#6a6a78" stroke-width="0.9"/><path d="M580 8L587 8" stroke="#6a6a78" stroke-width="0.6"/>
<path d="M594 9L597 6L600 9" stroke="#6a6a78" fill="none" stroke-width="0.9"/>
<path d="M611.5 4.5L616.5 4.5L611.5 11L616.5 11Z" fill="none" stroke="#6a6a78" stroke-width="0.9"/>
<path d="M624 11L629.5 5.5M625 5L629.5 5L629.5 9.5" stroke="#4e4e5e" fill="none" stroke-width="0.9"/>
<rect x="642" y="5.5" width="5" height="5" fill="#9a9aa6"/><rect x="643.5" y="7" width="2" height="2" fill="#4e4e5e"/>
<rect x="654.5" y="5" width="6" height="6" fill="#a0a0aa" stroke="#6a6a78" stroke-width="0.5"/>
</g>
</svg>
<!-- status -->
<div id="status" class="a"></div>
<div class="st" style="left:810px">0</div>
<div class="st" style="left:828px">Pan</div>
<div class="st" style="left:856px">目前的状态 1, 状态 1</div>
<div class="st" style="left:985px">0 + 0 选择的物体</div>

<!-- right panel -->
<div id="rpanel" class="a"></div>
<svg class="a" style="left:1061px;top:62px" width="19" height="16"><path d="M7.5 4.5L11 8L7.5 11.5" stroke="#333" fill="none" stroke-width="1.6"/></svg>
<div class="rb" style="top:80px"></div>
<div class="rb" style="top:99px"></div>
<div class="rb" style="top:117px"></div>
<div class="rb" style="top:135px"></div>
<svg class="a" style="left:1062px;top:80px" width="18" height="72" fill="#ececf2">
<circle cx="7" cy="11" r="1.9" fill="none" stroke="#ececf2" stroke-width="1.3"/>
<circle cx="7" cy="11" r="2.8" fill="none" stroke="#ececf2" stroke-width="1.2" stroke-dasharray="1.1 1.1"/>
<text x="9.5" y="8.5" font-size="7" font-family="Liberation Sans" font-weight="bold">?</text>
<circle cx="8.5" cy="26.5" r="3" fill="none" stroke="#ececf2" stroke-width="2"/>
<circle cx="8.5" cy="26.5" r="4.4" fill="none" stroke="#ececf2" stroke-width="1.6" stroke-dasharray="1.6 1.85"/>
<path d="M4.5 42L8.5 39.5L12.5 42L12.5 47L8.5 49.5L4.5 47Z"/>
<path d="M4.5 42L8.5 44.3L12.5 42M8.5 44.3L8.5 49.5" stroke="#2f2f42" stroke-width="0.7" fill="none"/>
<rect x="4.5" y="59" width="3.5" height="3.5"/><path d="M9.5 62.5L11.5 58.8L13.5 62.5Z"/><circle cx="6.2" cy="66" r="1.8"/><path d="M11.5 64L11.5 68M9.5 66L13.5 66" stroke="#ececf2" stroke-width="1.3"/>
</svg>
</body></html>
